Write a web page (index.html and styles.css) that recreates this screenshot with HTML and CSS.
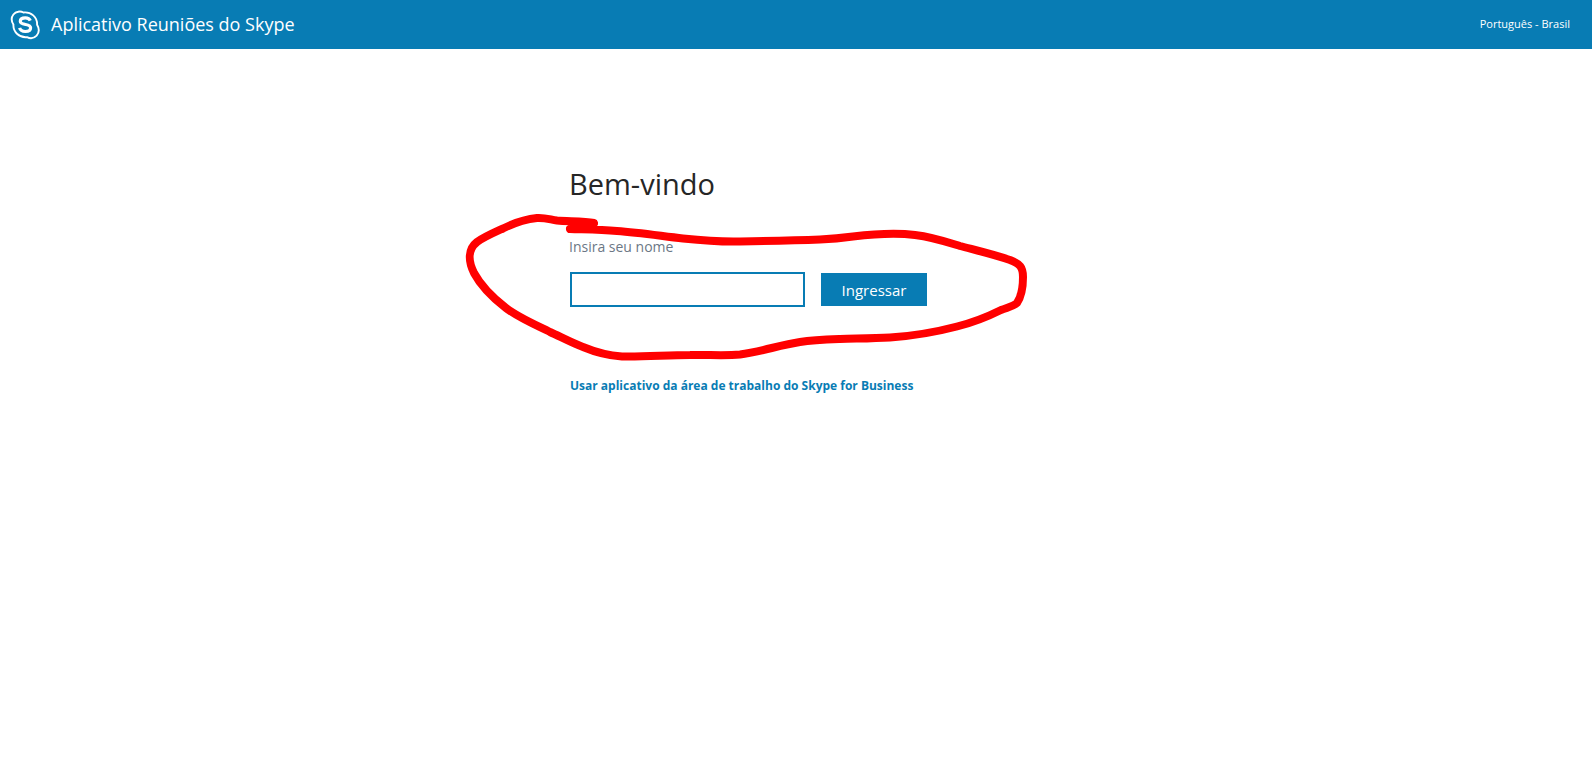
FILE: index.html
```html
<!DOCTYPE html>
<html lang="pt-BR">
<head>
<meta charset="utf-8">
<title>Aplicativo Reuniões do Skype</title>
<link rel="stylesheet" href="styles.css">
</head>
<body>
<header class="topbar">
  <svg class="logo" viewBox="0 0 30 30" aria-hidden="true">
    <path d="M8.200 1.700C10 1.300 12 1.700 13.400 2.500C21 1.600 27.400 7 27.100 14.800C29.300 18.500 29.200 22.600 26.600 25.600C23.800 28.600 20 28.700 17 27.200C9.500 28 3 22.200 3.400 14.600C1.200 11 1.300 7.200 3.400 4.500C4.600 3 6.300 2 8.200 1.700Z" fill="none" stroke="#fff" stroke-width="1.900"/>
    <path d="M20.300 10.700C19.500 8.700 17.800 7.900 15.300 7.900C12.300 7.900 10.300 9.200 10.300 11.200C10.300 15.800 20.600 13.200 20.600 17.700C20.600 20.300 18.400 21.500 15.400 21.500C12.400 21.500 10.300 20.400 9.600 17.900" fill="none" stroke="#fff" stroke-width="3.200"/>
  </svg>
  <span class="app-name">Aplicativo Reuniões do Skype</span>
  <span class="locale">Português - Brasil</span>
</header>
<main class="welcome">
  <h1 class="heading">Bem-vindo</h1>
  <form class="join">
    <label class="label" for="name">Insira seu nome</label>
    <div class="row">
      <input class="name" id="name" type="text">
      <button class="submit" type="button">Ingressar</button>
    </div>
  </form>
  <a class="desktop-link" href="#">Usar aplicativo da área de trabalho do Skype for Business</a>
  <svg class="marker" viewBox="460 210 572 156" aria-hidden="true">
    <path d="M570 229L594 223C584 221 568 221.500 557 220.500C550 219.500 545 217.500 537 218C527 219 514 223 503 228.500C492 233.500 484 237 477 242C468 249 468 261 474 273C481 286 493 298 506 308C519 318 536 325 550 332C561 337 572 343 583 347C595 352 607 355.500 622 356.500C645 357 667 355 690 355C707 354.500 724 356 740 354.500C760 352 780 345 800 342C813 340 827 339.500 840 339C857 338.500 873 338.500 890 337.500C913 336 936 332 957 326.500C975 322 989 316 1001 310C1009 307 1014 306 1017 303C1021 297 1023 288 1023 277C1023 267 1020 264 1010 260C994 254.500 977 250.500 960 246C944 241 932 237 915 235C895 232.500 874 234 853 236.500C842 238 831 239 820 239.500C793 240.500 767 241 740 241.500C721 242 702 240.500 683 238.500C661 236 639 232.500 617 231C600 229.500 585 229.500 570 229"/>
  </svg>
</main>
</body>
</html>
```
FILE: styles.css
```css
* { box-sizing: border-box; }

body {
  margin: 0;
  background: #fff;
  color: #262626;
  font-family: "Segoe UI", "Open Sans", "Noto Sans", sans-serif;
}

.topbar {
  display: flex;
  align-items: center;
  height: 49px;
  padding: 0 22px 0 10px;
  background: #087cb4;
  color: #fff;
}

.logo {
  width: 30px;
  height: 30px;
  margin-right: 11px;
}

.app-name {
  padding-bottom: 2px;
  font-size: 18px;
}

.locale {
  margin-left: auto;
  padding-bottom: 2px;
  font-size: 11px;
  line-height: 20px;
}

.welcome {
  position: relative;
  width: 454px;
  margin: 0 auto;
  padding-top: 115px;
}

.heading {
  margin: 0;
  font-size: 29px;
  font-weight: 400;
  line-height: 40px;
}

.join { padding-top: 33px; }

.label {
  display: block;
  color: #6b7785;
  font-size: 14px;
  line-height: 20px;
}

.row {
  display: flex;
  align-items: center;
  gap: 16px;
  margin: 15px 0 0 1px;
}

.name {
  width: 235px;
  height: 35px;
  padding: 0 8px;
  border: 2px solid #087cb4;
  background: #fff;
  font: inherit;
}

.submit {
  width: 106px;
  height: 33px;
  padding: 0;
  border: 0;
  background: #087cb4;
  color: #fff;
  font: inherit;
  font-size: 15px;
}

.desktop-link {
  display: block;
  margin: 69px 0 0 1px;
  color: #087cb4;
  font-size: 12px;
  font-weight: 700;
  line-height: 20px;
  text-decoration: none;
}

.marker {
  position: absolute;
  top: 161px;
  left: -109px;
  width: 572px;
  height: 156px;
  fill: none;
  stroke: #f00;
  stroke-width: 8;
  stroke-linecap: round;
  stroke-linejoin: round;
  pointer-events: none;
}
```
